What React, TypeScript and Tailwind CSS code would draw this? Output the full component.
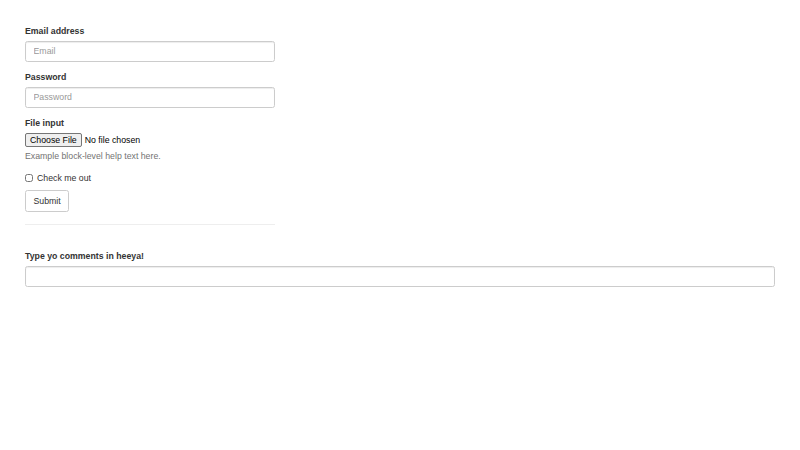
import React from 'react';

// Bootstrap-style form, rendered at the scale of the screenshot

const labelClass = 'block mb-[3px] text-[8.75px] leading-[12.5px] font-bold text-[#333]';
const inputClass =
  'block w-full h-[21.25px] px-[7.5px] text-[8.75px] text-[#555] bg-white border border-[#ccc] rounded-[2.5px] shadow-[inset_0_1px_1px_rgba(0,0,0,0.075)] placeholder:text-[#999] outline-none';

export default function App() {
  return (
    <div
      className="min-h-[450px] bg-white px-[25px] pt-[25px] text-[8.75px] leading-[12.5px] text-[#333]"
      style={{ fontFamily: '"Liberation Sans", Arial, sans-serif' }}
    >
      <form className="w-[250px]">
        <div className="mb-[9.4px]">
          <label className={labelClass}>Email address</label>
          <input type="email" placeholder="Email" className={inputClass} />
        </div>
        <div className="mb-[9.4px]">
          <label className={labelClass}>Password</label>
          <input type="password" placeholder="Password" className={inputClass} />
        </div>
        <div className="mb-[9.4px]">
          <label className={labelClass}>File input</label>
          <div className="flex items-center h-[14px]">
            <span className="inline-flex items-center h-[14px] px-[4px] text-[8.75px] text-black bg-[#efefef] border border-[#767676] rounded-[2px]">
              Choose File
            </span>
            <span className="ml-[3px] text-[8.75px] text-black">No file chosen</span>
          </div>
          <p className="mt-[3px] text-[#737373]">Example block-level help text here.</p>
        </div>
        <div className="my-[6.25px] flex items-center">
          <input type="checkbox" className="w-[8px] h-[8px] m-0" />
          <span className="ml-[4px]">Check me out</span>
        </div>
        <button
          type="button"
          className="h-[21.25px] px-[7.5px] text-[8.75px] text-[#333] bg-white border border-[#ccc] rounded-[2.5px]"
        >
          Submit
        </button>
        <hr className="mt-[12px] mb-[12.5px] border-0 border-t border-[#eee]" />
      </form>

      <div className="pt-[13px]">
        <label className={labelClass}>Type yo comments in heeya!</label>
        <input type="text" className={inputClass} />
      </div>
    </div>
  );
}
